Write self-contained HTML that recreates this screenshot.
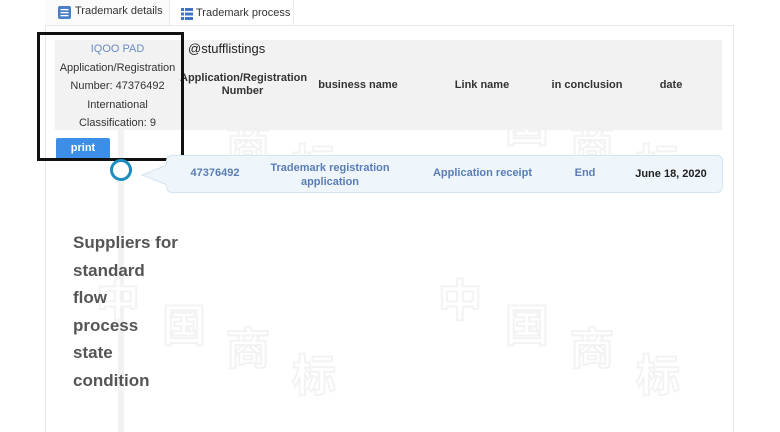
<!DOCTYPE html>
<html><head><meta charset="utf-8"><style>
*{margin:0;padding:0;box-sizing:border-box}
html,body{width:780px;height:432px;overflow:hidden}
body{background:#fff;font-family:"Liberation Sans","Noto Sans CJK SC",sans-serif;position:relative;color:#333}
.abs{position:absolute}
.wm{position:absolute;font-family:"Noto Sans CJK SC",sans-serif;font-size:44px;color:#fff;-webkit-text-stroke:2px #f3f3f3;font-weight:bold;line-height:1}
.th{position:absolute;font-size:11px;font-weight:bold;color:#333;text-align:center}
.td{position:absolute;font-size:11px;font-weight:bold;color:#5a7db5;text-align:center}
.big{position:absolute;left:73px;font-size:17px;font-weight:bold;color:#555}
</style></head><body>
<div class="abs" style="left:45px;top:0;width:125px;height:26px;background:#fafafa;border-right:1px solid #ececec"></div>
<div class="abs" style="left:170px;top:0;width:124px;height:26px;border-right:1px solid #ececec"></div>
<svg class="abs" style="left:57px;top:5px" width="15" height="15"><rect x="1" y="1" width="13" height="13" rx="2" fill="#4a7fc8"/><rect x="3.5" y="4" width="8" height="1.3" fill="#fff"/><rect x="3.5" y="7" width="8" height="1.3" fill="#fff"/><rect x="3.5" y="10" width="8" height="1.3" fill="#fff"/></svg>
<div class="abs" style="left:75px;top:5px;font-size:11px;color:#333">Trademark details</div>
<svg class="abs" style="left:181px;top:8px" width="12" height="12"><g fill="#3f74c4"><rect x="0" y="0" width="3" height="3"/><rect x="4" y="0" width="8" height="3"/><rect x="0" y="4.5" width="3" height="3"/><rect x="4" y="4.5" width="8" height="3"/><rect x="0" y="9" width="3" height="3"/><rect x="4" y="9" width="8" height="3"/></g></svg>
<div class="abs" style="left:196px;top:7px;font-size:11px;color:#333">Trademark process</div>
<div class="abs" style="left:45px;top:25px;width:689px;height:420px;border:1px solid #e8e8e8"></div>
<div class="abs" style="left:118px;top:130px;width:6px;height:302px;background:#f2f2f2"></div>
<div class="wm" style="left:96px;top:275px">中</div><div class="wm" style="left:162px;top:300px">国</div><div class="wm" style="left:226px;top:323px">商</div><div class="wm" style="left:292px;top:350px">标</div>
<div class="wm" style="left:438px;top:275px">中</div><div class="wm" style="left:505px;top:300px">国</div><div class="wm" style="left:570px;top:323px">商</div><div class="wm" style="left:636px;top:350px">标</div>
<div class="wm" style="left:226px;top:118px">商</div><div class="wm" style="left:292px;top:140px">标</div>
<div class="wm" style="left:505px;top:100px">国</div><div class="wm" style="left:570px;top:118px">商</div><div class="wm" style="left:636px;top:140px">标</div>
<div class="abs" style="left:55px;top:40px;width:667px;height:90px;background:#f2f2f2"></div>
<div class="abs" style="left:55px;top:40px;width:125px;text-align:center;font-size:11px;line-height:18.5px;color:#333"><span style="color:#6a8cc0">IQOO PAD</span><br>Application/Registration<br>Number: 47376492<br>International<br>Classification: 9</div>
<div class="abs" style="left:188px;top:41px;font-size:13px;color:#222">@stufflistings</div>
<div class="th" style="left:180px;top:72px;width:125px;line-height:13px">Application/Registration Number</div>
<div class="th" style="left:308px;top:79px;width:100px">business name</div>
<div class="th" style="left:432px;top:79px;width:100px">Link name</div>
<div class="th" style="left:537px;top:79px;width:100px">in conclusion</div>
<div class="th" style="left:631px;top:79px;width:80px">date</div>
<div class="abs" style="left:56px;top:138px;width:54px;height:22px;background:#3c8ee6;border-radius:2px;color:#fff;font-size:11px;font-weight:bold;text-align:center;line-height:21px">print</div>
<div class="abs" style="left:37px;top:32px;width:147px;height:129px;border:3px solid #111"></div>
<div class="abs" style="left:110px;top:159px;width:22px;height:22px;border:3.5px solid #1e8cbf;border-radius:50%;background:#fff"></div>
<div class="abs" style="left:166px;top:155px;width:557px;height:38px;background:#eef6fb;border:1px solid #d4e5f0;border-radius:6px"></div>
<svg class="abs" style="left:140px;top:164px" width="28" height="22"><path d="M27 1 L2 11 L27 21" fill="#eef6fb" stroke="#d4e5f0"/><rect x="26.5" y="0" width="2" height="22" fill="#eef6fb"/></svg>
<div class="td" style="left:180px;top:167px;width:70px">47376492</div>
<div class="td" style="left:260px;top:161px;width:140px;line-height:14px">Trademark registration application</div>
<div class="td" style="left:420px;top:167px;width:125px">Application receipt</div>
<div class="td" style="left:560px;top:167px;width:50px">End</div>
<div class="th" style="left:628px;top:168px;width:86px;color:#222">June 18, 2020</div>
<div class="big" style="top:233px">Suppliers for</div>
<div class="big" style="top:261px">standard</div>
<div class="big" style="top:288px">flow</div>
<div class="big" style="top:316px">process</div>
<div class="big" style="top:343px">state</div>
<div class="big" style="top:371px">condition</div>
</body></html>
